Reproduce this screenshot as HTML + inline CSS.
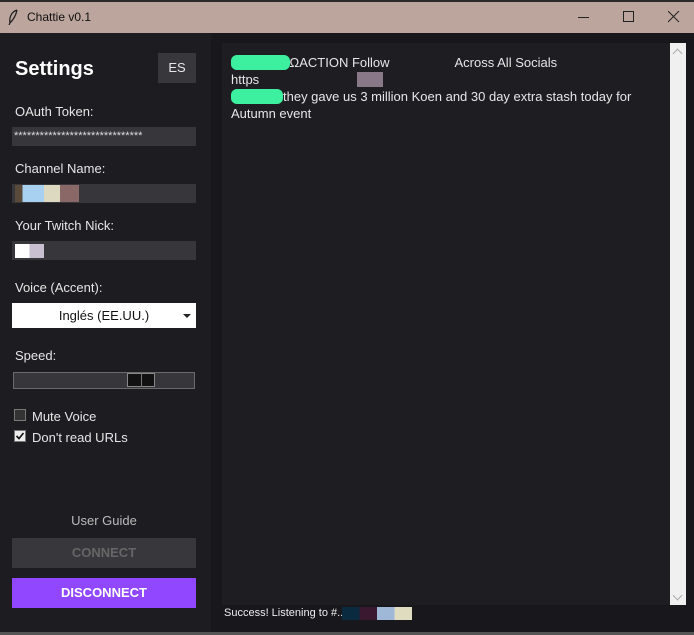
<!DOCTYPE html><html><head><style>
body{margin:0;width:694px;height:635px;background:#18171b;font-family:"Liberation Sans",sans-serif;position:relative;overflow:hidden}
.a{position:absolute}
.t{color:#e6e6e6;font-size:13px}
</style></head><body>
<div class="a" style="left:0;top:0;width:694px;height:2px;background:#2a2a2a"></div>
<div class="a" style="left:0;top:2px;width:694px;height:31px;background:#bba59c"></div>
<svg class="a" style="left:7px;top:9px" width="12" height="16"><path d="M10 1 C4 3 2 9 3 14 M3 14 L2 16 M10 1 C9 6 6 11 3 14" stroke="#222" fill="none" stroke-width="1.3"/></svg>
<div class="a" style="left:27px;top:10px;font-size:12px;color:#111">Chattie v0.1</div>
<div class="a" style="left:578px;top:17px;width:11px;height:1px;background:#222"></div>
<div class="a" style="left:623px;top:11px;width:9px;height:9px;border:1px solid #222"></div>
<svg class="a" style="left:668px;top:11px" width="12" height="12"><path d="M0 0L11 11M11 0L0 11" stroke="#222"/></svg>
<div class="a" style="left:0;top:33px;width:211px;height:599px;background:#1d1c21"></div>
<div class="a" style="left:15px;top:58px;color:#fff;font-weight:bold;font-size:20px">Settings</div>
<div class="a" style="left:158px;top:53px;width:38px;height:30px;background:#38373c;color:#e6e6e6;font-size:13px;text-align:center;line-height:30px">ES</div>
<div class="a t" style="left:15px;top:104px">OAuth Token:</div>
<div class="a" style="left:12px;top:127px;width:184px;height:19px;background:#37363b;color:#ddd;font-size:11px;line-height:19px;padding-left:2px;box-sizing:border-box">******************************</div>
<div class="a t" style="left:15px;top:161px">Channel Name:</div>
<div class="a" style="left:12px;top:184px;width:184px;height:19px;background:#37363b"></div>
<div class="a" style="left:15px;top:185px;width:64px;height:17px;background:linear-gradient(90deg,#5a4a3a 0 12%,#a8d0f0 12% 45%,#ddd8c0 45% 70%,#8a6868 70%)"></div>
<div class="a t" style="left:15px;top:218px">Your Twitch Nick:</div>
<div class="a" style="left:12px;top:241px;width:184px;height:19px;background:#37363b"></div>
<div class="a" style="left:15px;top:244px;width:29px;height:14px;background:linear-gradient(90deg,#fff 0 50%,#c8c0d0 50%)"></div>
<div class="a t" style="left:15px;top:280px">Voice (Accent):</div>
<div class="a" style="left:12px;top:303px;width:184px;height:25px;background:#fff;color:#111;font-size:13px;line-height:25px;text-align:center">Inglés (EE.UU.)</div>
<div class="a" style="left:183px;top:314px;width:0;height:0;border-left:4px solid transparent;border-right:4px solid transparent;border-top:4px solid #222"></div>
<div class="a t" style="left:15px;top:348px">Speed:</div>
<div class="a" style="left:13px;top:372px;width:180px;height:15px;background:#37363b;border:1px solid #6a6a6a"></div>
<div class="a" style="left:127px;top:373px;width:28px;height:14px;background:#111;border:1px solid #888;box-sizing:border-box"></div>
<div class="a" style="left:141px;top:373px;width:1px;height:14px;background:#777"></div>
<div class="a" style="left:14px;top:409px;width:12px;height:12px;background:#333;border:1px solid #777;box-sizing:border-box"></div>
<div class="a t" style="left:32px;top:409px">Mute Voice</div>
<div class="a" style="left:14px;top:430px;width:12px;height:12px;background:#eee;border:1px solid #777;box-sizing:border-box"></div>
<svg class="a" style="left:15px;top:431px" width="10" height="10"><path d="M1.5 5L4 7.5L8.5 2" stroke="#111" stroke-width="1.6" fill="none"/></svg>
<div class="a t" style="left:32px;top:430px">Don't read URLs</div>
<div class="a" style="left:12px;top:513px;width:184px;text-align:center;color:#bbb;font-size:13px">User Guide</div>
<div class="a" style="left:12px;top:538px;width:184px;height:30px;background:#38373c;color:#666;font-weight:bold;font-size:13px;text-align:center;line-height:30px">CONNECT</div>
<div class="a" style="left:12px;top:578px;width:184px;height:30px;background:#9147ff;color:#fff;font-weight:bold;font-size:13px;text-align:center;line-height:30px">DISCONNECT</div>
<div class="a" style="left:222px;top:43px;width:448px;height:562px;background:#1e1d22"></div>
<div class="a" style="left:670px;top:43px;width:16px;height:562px;background:#f0f0f0"></div>
<div class="a" style="left:674px;top:50px;width:6px;height:6px;border-left:1px solid #aaa;border-top:1px solid #aaa;transform:rotate(45deg)"></div>
<div class="a" style="left:674px;top:592px;width:6px;height:6px;border-right:1px solid #aaa;border-bottom:1px solid #aaa;transform:rotate(45deg)"></div>
<div class="a" style="left:231px;top:54px;color:#e6e6e6;font-size:13px;line-height:17px;width:430px">
<span style="background:#3cf0a0;color:#3cf0a0;border-radius:6px">xxxxxxxxx</span>ΩACTION Follow<span style="display:inline-block;width:65px"></span>Across All Socials<br>https<span style="color:transparent">xxxxxxxxxxxxxxx</span><span style="background:#887888;color:transparent">xxxx</span><br><span style="background:#3cf0a0;color:#3cf0a0;border-radius:6px">xxxxxxxx</span>they gave us 3 million Koen and 30 day extra stash today for Autumn event</div>
<div class="a" style="left:224px;top:607px;color:#eee;font-size:11px">Success! Listening to #..</div>
<div class="a" style="left:342px;top:607px;width:70px;height:13px;background:linear-gradient(90deg,#0a2a40 0 25%,#3a1830 25% 50%,#a0b8d8 50% 75%,#e0dcc0 75%)"></div>
<div class="a" style="left:0;top:632px;width:694px;height:3px;background:#555"></div>
</body></html>
